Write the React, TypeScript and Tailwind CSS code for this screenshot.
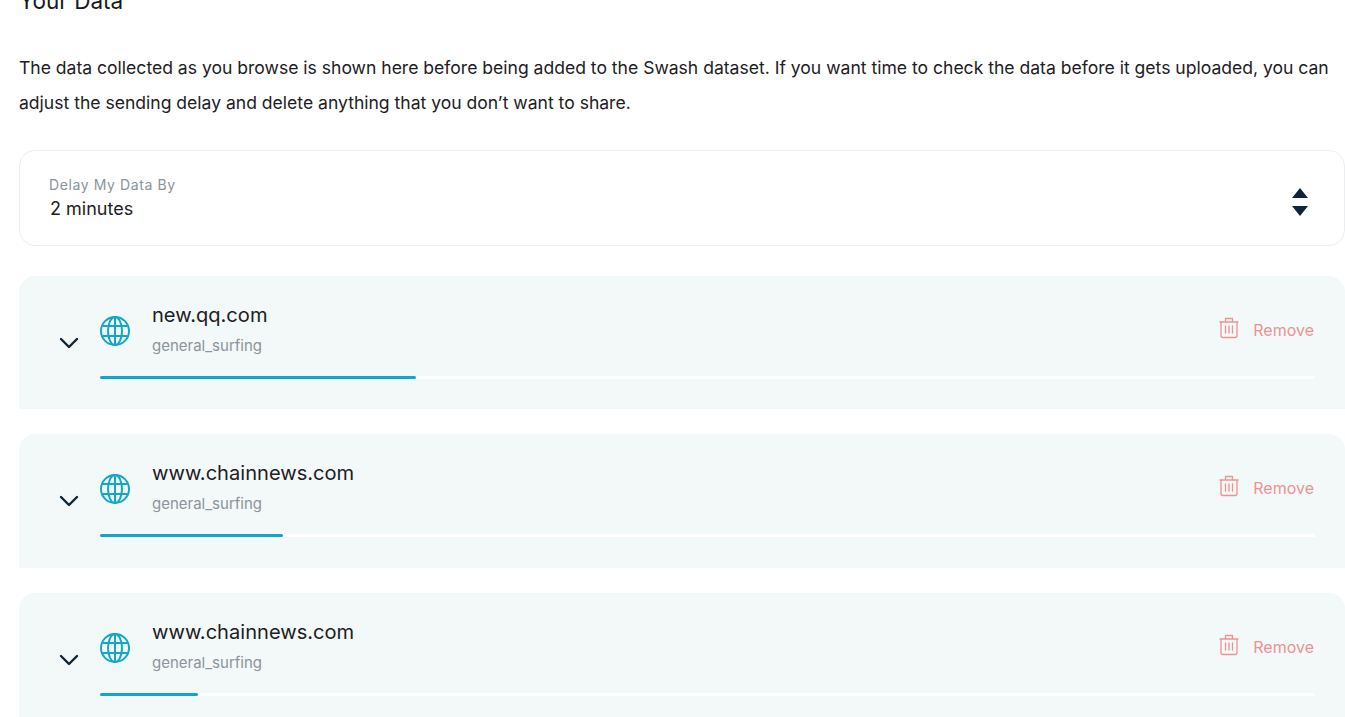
import React from 'react';

const GlobeIcon: React.FC = () => (
  <svg className="w-[30px] h-[30px] text-[#14a6c6]" viewBox="0 0 30 30" fill="none" stroke="currentColor" strokeWidth={2}>
    <circle cx="15" cy="15" r="14" />
    <ellipse cx="15" cy="15" rx="7" ry="14" />
    <path d="M15 1v28M2.5 10h25M2.5 20h25" />
  </svg>
);

const TrashIcon: React.FC = () => (
  <svg className="w-5 h-[22px] text-[#ee9292]" viewBox="0 0 20 22" fill="none" stroke="currentColor" strokeWidth={1.3} strokeLinecap="round" strokeLinejoin="round">
    <path d="M1 5h18M6.5 5V1.5h7V5M2 5v13.5a2 2 0 002 2h12a2 2 0 002-2V5M6.5 9v7M10 9v7M13.5 9v7" />
  </svg>
);

const ChevronIcon: React.FC = () => (
  <svg className="w-5 h-3" viewBox="0 0 20 12" fill="none" stroke="#0f2537" strokeWidth={2.4} strokeLinecap="round" strokeLinejoin="round">
    <path d="M2 2l8 8 8-8" />
  </svg>
);

const SortIcon: React.FC = () => (
  <svg className="w-4 h-7" viewBox="0 0 16 28" fill="#0f2537">
    <path d="M8 0l8 10H0zM8 28L0 18h16z" />
  </svg>
);

const DataRow: React.FC<{ host: string; progress: number; height: string }> = ({ host, progress, height }) => (
  <div className={`bg-[#f3f9f8] rounded-t-2xl pl-10 pr-[30px] flex items-start shrink-0 ${height}`}>
    <div className="w-[41px] pt-[61px] shrink-0">
      <ChevronIcon />
    </div>
    <div className="flex-1 pt-[26px]">
      <div className="flex items-center h-[58px]">
        <GlobeIcon />
        <div className="ml-[22px] flex-1 -mt-[4px]">
          <div className="text-[20.1px] leading-[26px] text-[#1d2024]">{host}</div>
          <div className="text-[15px] leading-5 mt-[8px] text-[#8a949c]">general_surfing</div>
        </div>
        <div className="flex items-center self-start mt-[12px] text-[#ee9292]">
          <TrashIcon />
          <span className="ml-[14px] mr-[1px] text-base leading-6 pt-[4px]">Remove</span>
        </div>
      </div>
      <div className="h-[3px] mt-[16px] bg-white rounded-full">
        <div className="h-[3px] bg-[#14a6c6] rounded-full" style={{ width: progress }} />
      </div>
    </div>
  </div>
);

export default function App() {
  return (
    <div className="h-[717px] w-[1345px] overflow-hidden bg-white pl-[19px] font-['Inter',sans-serif]">
      <h2 className="text-[22.5px] leading-7 -mt-[13px] text-[#16191d]">Your Data</h2>
      <p className="mt-[35px] text-[17.56px] leading-[35px] text-[#1d2024] whitespace-nowrap">
        The data collected as you browse is shown here before being added to the Swash dataset. If you want time to check the data before it gets uploaded, you can
        <br />
        adjust the sending delay and delete anything that you don’t want to share.
      </p>
      <div className="mt-[30px] h-24 border border-[#ebeeef] rounded-2xl flex items-center justify-between pl-[29px] pr-[36px]">
        <div className="mt-[2px]">
          <div className="text-sm leading-5 text-[#8a949c] tracking-[0.6px] -mt-[2px]">Delay My Data By</div>
          <div className="text-lg leading-6 mt-[2px] ml-[1px] text-[#1d2024]">2 minutes</div>
        </div>
        <div className="mt-[8px]">
          <SortIcon />
        </div>
      </div>
      <div className="mt-[30px] flex flex-col gap-[25px]">
        <DataRow host="new.qq.com" progress={316} height="h-[133px]" />
        <DataRow host="www.chainnews.com" progress={183} height="h-[134px]" />
        <DataRow host="www.chainnews.com" progress={98} height="h-[134px]" />
      </div>
    </div>
  );
}
